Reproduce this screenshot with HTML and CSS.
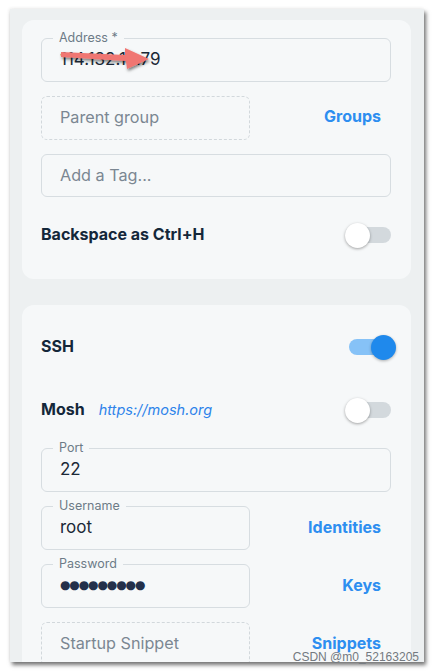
FILE: index.html
```html
<!DOCTYPE html>
<html>
<head>
<meta charset="utf-8">
<link rel="stylesheet" href="styles.css">
</head>
<body>
<div class="frame">
  <section class="card card-top">
    <div class="field">
      <span class="label">Address *</span>
      <span class="value">114.132.19.79</span>
      <svg class="arrow" width="100" height="30" viewBox="0 0 100 30">
        <defs>
          <filter id="sh" x="-20%" y="-50%" width="140%" height="200%">
            <feDropShadow dx="1" dy="2" stdDeviation="1.8" flood-color="#000" flood-opacity="0.5"/>
          </filter>
        </defs>
        <path d="M3 7 L67 10 L67 3 L91 14 L69 24 L68 16 L3 12 Z" fill="#f07672" filter="url(#sh)"/>
      </svg>
    </div>
    <div class="split">
      <div class="field dashed"><span class="placeholder">Parent group</span></div>
      <a class="link">Groups</a>
    </div>
    <div class="field"><span class="placeholder">Add a Tag...</span></div>
    <div class="toggle-row">
      <span class="title">Backspace as Ctrl+H</span>
      <span class="toggle"><span class="knob"></span></span>
    </div>
  </section>

  <section class="card card-bottom">
    <div class="toggle-row first">
      <span class="title">SSH</span>
      <span class="toggle on"><span class="knob"></span></span>
    </div>
    <div class="toggle-row mosh">
      <span class="title">Mosh <a class="ext">https://mosh.org</a></span>
      <span class="toggle"><span class="knob"></span></span>
    </div>
    <div class="field">
      <span class="label">Port</span>
      <span class="value">22</span>
    </div>
    <div class="split">
      <div class="field"><span class="label">Username</span><span class="value">root</span></div>
      <a class="link">Identities</a>
    </div>
    <div class="split">
      <div class="field"><span class="label">Password</span><span class="value dots">●●●●●●●●●</span></div>
      <a class="link">Keys</a>
    </div>
    <div class="split">
      <div class="field dashed"><span class="placeholder">Startup Snippet</span></div>
      <a class="link">Snippets</a>
    </div>
  </section>
</div>
<div class="watermark">CSDN @m0_52163205</div>
</body>
</html>
```

FILE: styles.css
```css
html, body {
  margin: 0;
  padding: 0;
  background: #ffffff;
  font-family: Inter, "Noto Sans", sans-serif;
}

body {
  width: 435px;
  height: 672px;
  overflow: hidden;
  position: relative;
}

.frame {
  margin: 9px 0 0 10px;
  width: 414px;
  height: 653px;
  background: #edf0f1;
  overflow: hidden;
  box-shadow: 2px 3px 4px rgba(0, 0, 0, 0.55), -1px -1px 3px rgba(0, 0, 0, 0.06);
  padding-top: 11px;
  box-sizing: border-box;
}

.card {
  width: 389px;
  margin-left: 12px;
  background: #f6f8f9;
  border-radius: 12px;
  box-sizing: border-box;
  padding: 18px 20px 20px 19px;
  display: flex;
  flex-direction: column;
}

.card-top {
  height: 259px;
  gap: 14px;
}

.card-top > .field:nth-of-type(2) { margin-top: -1px; }

.card-bottom {
  margin-top: 26px;
  padding-top: 18px;
  gap: 14px;
}

.card-bottom .mosh { margin-top: 1px; }

.field {
  position: relative;
  height: 44px;
  border: 1px solid #d7dde1;
  border-radius: 6px;
  box-sizing: border-box;
  display: flex;
  align-items: center;
  padding-left: 18px;
  padding-bottom: 2px;
}

.field.dashed {
  border: 1px dashed #d2d8dc;
}

.label {
  position: absolute;
  top: -9px;
  left: 11px;
  padding: 0 6px;
  background: #f6f8f9;
  font-size: 12.5px;
  line-height: 16px;
  color: #6d7b87;
}

.value {
  font-size: 17px;
  color: #1b2937;
}

.dots {
  font-family: "DejaVu Sans", sans-serif;
  font-size: 12px;
  letter-spacing: -1.1px;
  color: #24304a;
}

.placeholder {
  font-size: 16.2px;
  color: #7b8792;
}

.arrow {
  position: absolute;
  left: 16px;
  top: 6px;
}

.split {
  display: flex;
  align-items: center;
  justify-content: space-between;
}

.split .field {
  width: 209px;
}

.link {
  font-size: 16px;
  font-weight: 700;
  color: #2d8ef0;
  margin-right: 10px;
  margin-bottom: 3px;
}

.toggle-row {
  height: 48px;
  display: flex;
  align-items: center;
  justify-content: space-between;
}

.title {
  font-size: 16px;
  font-weight: 700;
  color: #14273a;
  display: flex;
  align-items: baseline;
  margin-bottom: 2px;
}

.ext {
  font-size: 14.5px;
  font-weight: 400;
  font-style: italic;
  color: #2d83ea;
  margin-left: 14px;
}

.toggle {
  position: relative;
  width: 46px;
  height: 16px;
  border-radius: 8px;
  background: #d3d9dd;
}

.toggle .knob {
  position: absolute;
  left: 0;
  top: -4.5px;
  width: 25px;
  height: 25px;
  border-radius: 50%;
  background: #ffffff;
  box-shadow: 0 1px 3px rgba(0, 0, 0, 0.35);
}

.toggle.on {
  background: #86c2f7;
  width: 42px;
}

.toggle.on .knob {
  left: 22px;
  background: #1f89ec;
  box-shadow: 0 1px 3px rgba(0, 0, 0, 0.3);
}

.watermark {
  position: absolute;
  right: 16px;
  top: 649px;
  font-family: "Liberation Sans", Arial, sans-serif;
  font-size: 12px;
  line-height: 16px;
  color: #737980;
}
```
